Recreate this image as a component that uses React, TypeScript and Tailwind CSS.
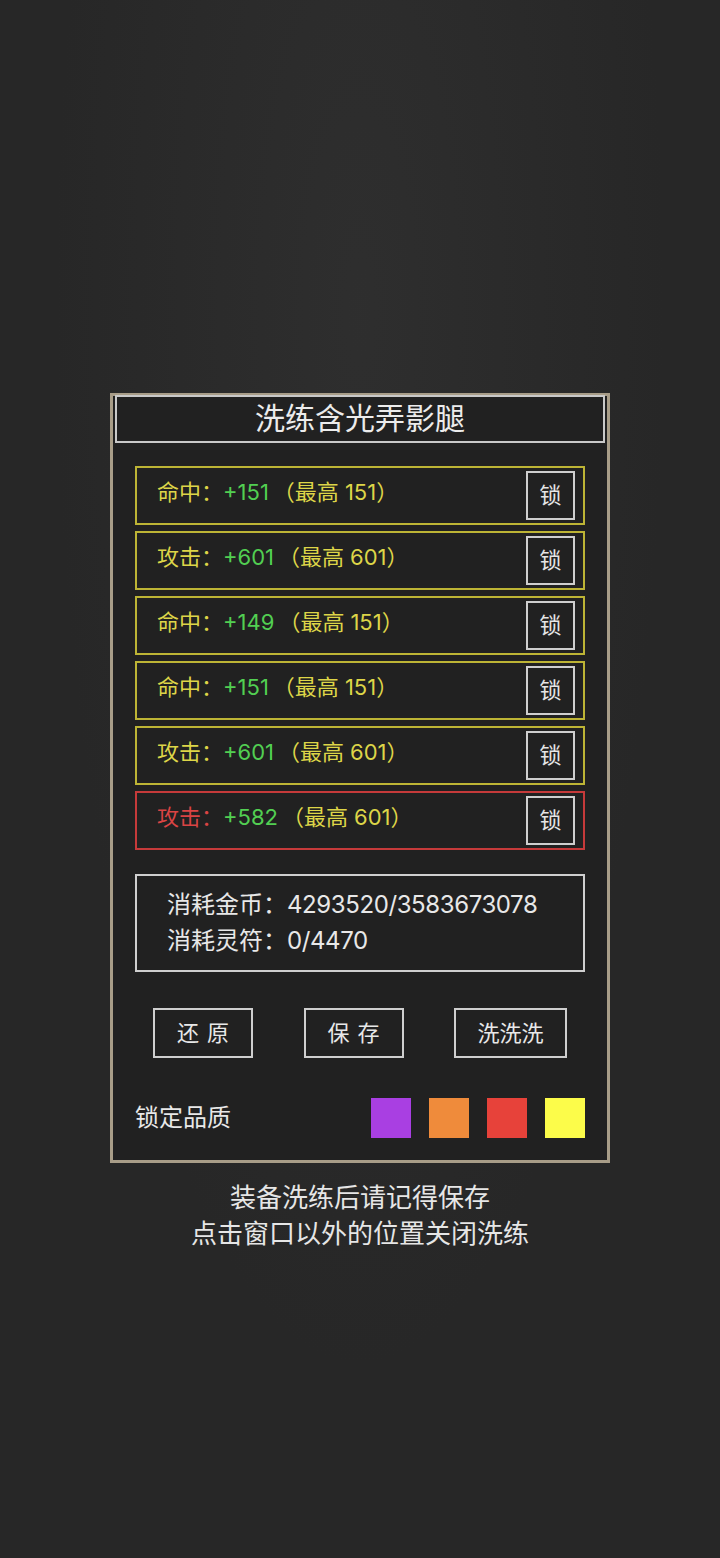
import React from "react";

const rows = [
  { label: "命中", val: "+151", max: "151", red: false },
  { label: "攻击", val: "+601", max: "601", red: false },
  { label: "命中", val: "+149", max: "151", red: false },
  { label: "命中", val: "+151", max: "151", red: false },
  { label: "攻击", val: "+601", max: "601", red: false },
  { label: "攻击", val: "+582", max: "601", red: true },
];

const FONT = '"Inter", "Noto Sans CJK SC", "Noto Sans", sans-serif';

export default function App() {
  return (
    <div
      className="w-[720px] h-[1558px] bg-[#272727] flex flex-col items-center pt-[393px]"
      style={{
        fontFamily: FONT,
        backgroundImage:
          "radial-gradient(ellipse at 50% 20%, rgba(60,60,60,0.35), rgba(0,0,0,0) 60%)",
      }}
    >
      <div className="w-[500px] h-[770px] border-[3px] border-[#a89d88] bg-[#212121] flex flex-col px-[22px] pb-[22px]">
        <div className="-mx-[20px] -mt-[1px] h-[48px] border-2 border-[#c9c9c9] flex items-center justify-center text-[30px] text-[#ececec] leading-none">
          <span className="-mt-[2px]">洗练含光弄影腿</span>
        </div>
        <div className="mt-[23px] flex flex-col gap-[6px]">
          {rows.map((r, i) =>
            r.red ? (
              <div
                key={i}
                className="h-[59px] border-2 border-[#c63a3a] flex items-center justify-between pl-[20px] pr-[8px]"
              >
                <RowText r={r} />
                <Lock />
              </div>
            ) : (
              <div
                key={i}
                className="h-[59px] border-2 border-[#bdb435] flex items-center justify-between pl-[20px] pr-[8px]"
              >
                <RowText r={r} />
                <Lock />
              </div>
            )
          )}
        </div>
        <div className="mt-[24px] h-[99px] border-2 border-[#cfcfcf] pl-[30px] flex flex-col justify-center text-[24px] text-[#e8e8e8] leading-[36px]">
          <div>
            消耗金币：<span className="tracking-[-0.4px]">4293520/3583673078</span>
          </div>
          <div>
            消耗灵符：<span className="tracking-[-0.4px]">0/4470</span>
          </div>
        </div>
        <div className="mt-[36px] flex justify-between px-[18px]">
          <div className="w-[100px] h-[50px] border-2 border-[#cfcfcf] flex items-center justify-center text-[22px] text-[#e8e8e8] tracking-[8px] pl-[8px]">
            还原
          </div>
          <div className="w-[100px] h-[50px] border-2 border-[#cfcfcf] flex items-center justify-center text-[22px] text-[#e8e8e8] tracking-[8px] pl-[8px]">
            保存
          </div>
          <div className="w-[113px] h-[50px] border-2 border-[#cfcfcf] flex items-center justify-center text-[22px] text-[#e8e8e8]">
            洗洗洗
          </div>
        </div>
        <div className="mt-[40px] flex items-center justify-between">
          <div className="text-[24px] text-[#e8e8e8]">锁定品质</div>
          <div className="flex gap-[18px]">
            <div className="w-[40px] h-[40px] bg-[#a93fe2]" />
            <div className="w-[40px] h-[40px] bg-[#ef8b3b]" />
            <div className="w-[40px] h-[40px] bg-[#e7423a]" />
            <div className="w-[40px] h-[40px] bg-[#fcfc4a]" />
          </div>
        </div>
      </div>
      <div className="mt-[17px] text-[26px] leading-[36px] text-[#e6e6e6] text-center">
        <div>装备洗练后请记得保存</div>
        <div>点击窗口以外的位置关闭洗练</div>
      </div>
    </div>
  );
}

function RowText({ r }: { r: { label: string; val: string; max: string; red: boolean } }) {
  return (
    <div className="text-[22px] leading-none -mt-[6px] whitespace-nowrap">
      <span className={r.red ? "text-[#da4444]" : "text-[#ddd548]"}>{r.label}：</span>
      <span className="text-[#52cf52]">{r.val}</span>
      <span className="text-[#ddd548] ml-[4px]">（最高</span>
      <span className="text-[#ddd548] ml-[6px]">{r.max}</span>
      <span className="text-[#ddd548]">）</span>
    </div>
  );
}

function Lock() {
  return (
    <div className="w-[49px] h-[49px] border-2 border-[#cfcfcf] flex items-center justify-center text-[22px] text-[#e6e6e6] leading-none">
      锁
    </div>
  );
}
